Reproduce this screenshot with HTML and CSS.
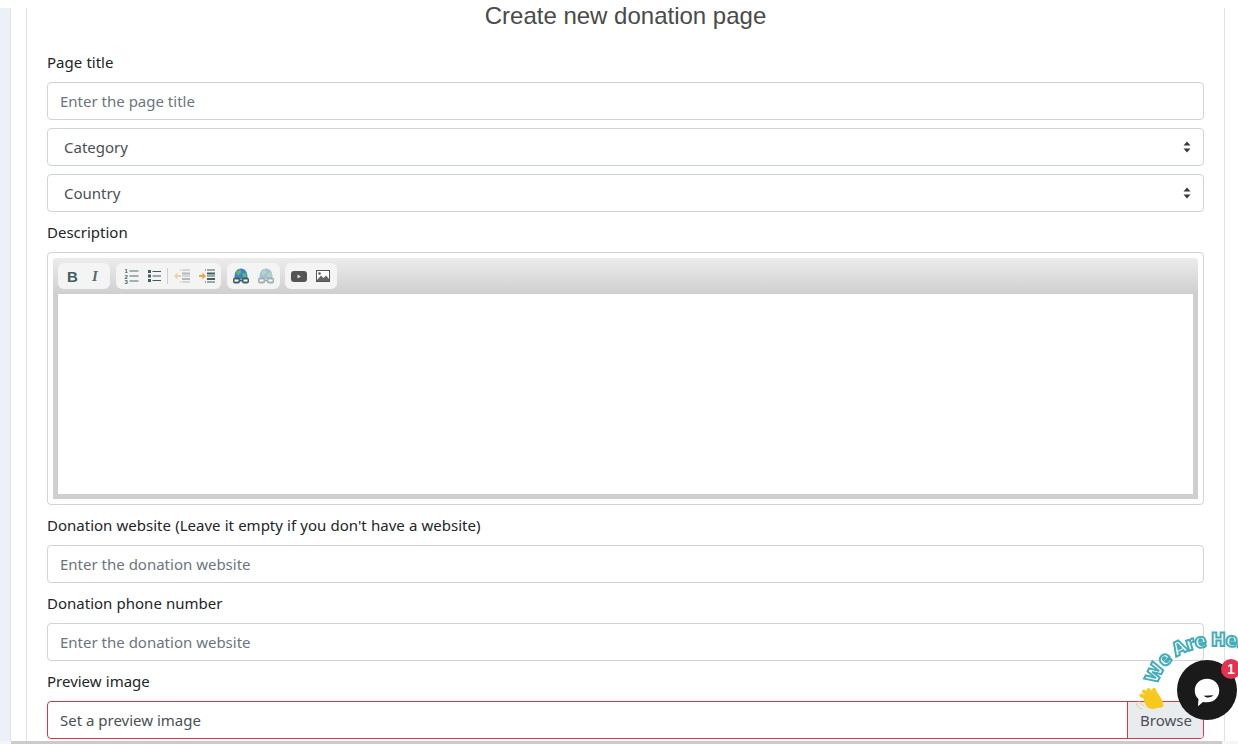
FILE: index.html
```html
<!DOCTYPE html>
<html lang="en">
<head>
<meta charset="utf-8">
<title>Create new donation page</title>
<link rel="stylesheet" href="styles.css">
</head>
<body>
<div class="page">
  <div class="main">
    <aside class="strip"></aside>
    <div class="content">
      <section class="card">
        <h3 class="title">Create new donation page</h3>
        <label class="label">Page title</label>
        <input class="field" type="text" placeholder="Enter the page title">
        <div class="field select"><span>Category</span><svg class="updown" viewBox="0 0 8 12"><path d="M4 0.5 7.5 4.6H0.5Z M4 11.5 0.5 7.4H7.5Z"/></svg></div>
        <div class="field select"><span>Country</span><svg class="updown" viewBox="0 0 8 12"><path d="M4 0.5 7.5 4.6H0.5Z M4 11.5 0.5 7.4H7.5Z"/></svg></div>
        <label class="label">Description</label>
        <div class="editor-box">
          <div class="editor">
            <div class="toolbar">
              <div class="tgroup g1">
                <span class="tb-b">B</span>
                <span class="tb-i">I</span>
              </div>
              <div class="tgroup g2">
                <svg class="ic" width="15" height="16" viewBox="0 0 15 16"><g class="ol-num"><text x="0.500" y="5">1</text><text x="0.500" y="10.500">2</text><text x="0.500" y="15.500">3</text></g><g fill="#4d6a6a"><rect x="5.500" y="2.500" width="9" height="1"/><rect x="5.500" y="7.500" width="9" height="1"/><rect x="5.500" y="12.500" width="9" height="1"/></g></svg>
                <svg class="ic" width="13" height="14" viewBox="0 0 13 14"><g fill="#3f5f5f"><rect x="0" y="1" width="3" height="3"/><rect x="0" y="5.500" width="3" height="3"/><rect x="0" y="10" width="3" height="3"/><rect x="4.500" y="2" width="8.500" height="1"/><rect x="4.500" y="6.500" width="8.500" height="1"/><rect x="4.500" y="11" width="8.500" height="1"/></g></svg>
                <i class="sep"></i>
                <svg class="ic faded" width="16" height="14" viewBox="0 0 16 14"><g fill="#5a7676"><rect x="6" y="0.500" width="1" height="1"/><rect x="6" y="12.500" width="1" height="1"/><rect x="8" y="0.500" width="8" height="1"/><rect x="8" y="3.500" width="8" height="2"/><rect x="8" y="6.500" width="8" height="1"/><rect x="8" y="9" width="8" height="2"/><rect x="8" y="12.500" width="8" height="1"/></g><path d="M0 7 3.500 3.500V6H7V8H3.500V10.500Z" fill="#f5a23c"/></svg>
                <svg class="ic" width="16" height="14" viewBox="0 0 16 14"><g fill="#3f5f5f"><rect x="6" y="0.500" width="1" height="1"/><rect x="6" y="12.500" width="1" height="1"/><rect x="8" y="0.500" width="8" height="1"/><rect x="8" y="3.500" width="8" height="2"/><rect x="8" y="6.500" width="8" height="1"/><rect x="8" y="9" width="8" height="2"/><rect x="8" y="12.500" width="8" height="1"/></g><path d="M7 7 3.500 3.500V6H0V8H3.500V10.500Z" fill="#f5a23c"/></svg>
              </div>
              <div class="tgroup g3">
                <svg class="ic" width="16" height="16" viewBox="0 0 16 16"><path d="M1.500 9C1.500 4 4 0.500 8 0.500S14.500 4 14.500 9V11H1.500Z" fill="#3d7fd6"/><path d="M3 4 7 1 8.500 4.500 5 8ZM9 5.500 13.500 5 13.500 9H10Z" fill="#63b95a"/><g fill="#3f5f5f"><rect x="0" y="9.500" width="7" height="6" rx="2"/><rect x="9" y="9.500" width="7" height="6" rx="2"/><rect x="5" y="11.500" width="6" height="2"/></g><g fill="#fff"><rect x="1.500" y="11.500" width="4" height="2"/><rect x="10.500" y="11.500" width="4" height="2"/></g></svg>
                <svg class="ic faded" width="16" height="16" viewBox="0 0 16 16"><path d="M1.500 9C1.500 4 4 0.500 8 0.500S14.500 4 14.500 9V11H1.500Z" fill="#3d7fd6"/><path d="M3 4 7 1 8.500 4.500 5 8ZM9 5.500 13.500 5 13.500 9H10Z" fill="#63b95a"/><g fill="#3f5f5f"><rect x="0" y="9.500" width="7" height="6" rx="2"/><rect x="9" y="9.500" width="7" height="6" rx="2"/><rect x="5" y="11.500" width="6" height="2"/></g><g fill="#fff"><rect x="1.500" y="11.500" width="4" height="2"/><rect x="10.500" y="11.500" width="4" height="2"/></g></svg>
              </div>
              <div class="tgroup g4">
                <svg class="ic" width="16" height="11" viewBox="0 0 16 11"><rect width="16" height="11" rx="3" fill="#555"/><path d="M6.500 3.500 10 5.500 6.500 7.500Z" fill="#ddd"/></svg>
                <svg class="ic" width="14" height="12" viewBox="0 0 14 12"><rect x="0.500" y="0.500" width="13" height="11" fill="#fff" stroke="#555"/><circle cx="3.500" cy="3.500" r="1.300" fill="#555"/><path d="M1 10 5 5.500 7.500 8 10 5.500 13 9V11H1Z" fill="#666"/></svg>
              </div>
            </div>
            <div class="edit-area"></div>
          </div>
        </div>
        <label class="label">Donation website (Leave it empty if you don't have a website)</label>
        <input class="field" type="text" placeholder="Enter the donation website">
        <label class="label">Donation phone number</label>
        <input class="field" type="text" placeholder="Enter the donation website">
        <label class="label">Preview image</label>
        <div class="file">
          <span class="file-text">Set a preview image</span>
          <span class="file-btn">Browse</span>
        </div>
      </section>
    </div>
  </div>
  <div class="hscroll"><div class="hthumb"></div></div>
</div>
<div class="chat">
  <svg class="chat-art" width="110" height="120" viewBox="0 0 110 120">
    <defs><path id="arc" d="M29 61C35 38 58 15 114 24"/></defs>
    <text class="arc-text"><textPath href="#arc">We Are Here</textPath></text>
    <path class="hand" d="M16 72C18 70 24 68 29 68C32 72 35 77 35.500 81C35.500 83 33 84.500 30.500 83.500C27 85.500 22 85.500 19 83C17 80 15 76 16 72Z"/>
    <path class="finger" d="M22 75 13.500 71.500M23 73 16 67.500M25 72 20.500 66M28 72 26 66"/>
    <path class="wave" d="M11 77C12 79 14 81 16 82M8 79C9 82 11 84 14 85"/>
  </svg>
  <div class="chat-btn">
    <svg width="28" height="31" viewBox="0 0 34 38"><path d="M17 2C26 2 32 8.500 32 16.500C32 25 25.500 31 17 31C15 31 13.500 31 12 30.500L6 36L6.500 27C3.500 24.500 2 20.500 2 16.500C2 8.500 8 2 17 2Z" fill="#fff"/><path d="M13 23C16 26 21 26 25 22.500Z" fill="#1a1a1a"/></svg>
  </div>
  <span class="badge">1</span>
</div>
</body>
</html>
```
FILE: styles.css
```css
* { box-sizing: border-box; }
html, body { margin: 0; height: 744px; overflow: hidden; background: #fff; }
body { font-family: "Noto Sans", "Open Sans", sans-serif; font-size: 15px; color: #212529; }
.page { display: flex; flex-direction: column; height: 744px; }
.main { display: flex; height: 741px; }
.strip { width: 11px; background: #ecf1f8; border-right: 1px solid #dfe3e8; margin-top: 8px; }
.content { flex: 1; padding: 8px 13px 0 15px; }
.card { width: 1199px; height: 733px; border-left: 1px solid #dfe2e6; border-right: 1px solid #dfe2e6; padding: 0 20px; display: flex; flex-direction: column; }
.title { margin: 0 0 26px; height: 16px; line-height: 16px; font-family: "Liberation Sans", Arial, sans-serif; font-size: 24px; font-weight: 400; color: #4a4a4a; text-align: center; }
.label { display: block; height: 24px; line-height: 24px; margin-bottom: 8px; color: #212529; word-spacing: .3px; }
.field { display: flex; align-items: center; justify-content: space-between; flex: none; width: 100%; height: 38px; margin-bottom: 8px; padding: 0 12px; border: 1px solid #ced4da; border-radius: 4px; background: #fff; font: inherit; color: #495057; outline: none; }
.field::placeholder { color: #6c757d; opacity: 1; }
.select { padding: 0 12px 0 16px; }
.updown { width: 8px; height: 12px; fill: #343a40; }
.editor-box { flex: none; height: 253px; margin-bottom: 8px; padding: 5px; border: 1px solid #ced4da; border-radius: 4px; }
.editor { height: 241px; padding: 0 5px 5px; background: #cfcfcf; border-radius: 3px 3px 0 0; display: flex; flex-direction: column; background-image: linear-gradient(#ececec, #cfcfcf 36px); }
.toolbar { flex: none; height: 36px; padding-top: 5px; display: flex; gap: 6px; align-items: flex-start; }
.tgroup { height: 26px; background: #f4f4f4; border-radius: 6px; display: flex; align-items: center; }
.g1 { width: 52px; gap: 15px; padding-left: 9px; }
.g2 { width: 105px; gap: 9px; padding-left: 8px; }
.g3 { width: 53px; gap: 9px; padding-left: 6px; }
.g4 { width: 52px; gap: 9px; padding-left: 6px; margin-left: -1px; }
.tb-b { font: 700 15px/1 "Liberation Sans", sans-serif; color: #3f6060; width: 10px; }
.tb-i { font: italic 700 15px/1 "Liberation Serif", serif; color: #5b6b6b; }
.ol-num { font: 700 6px "Liberation Sans", sans-serif; fill: #3f5f5f; }
.sep { width: 1px; height: 16px; background: #cfcfcf; margin: 0 -3px 0 -3px; }
.ic { flex: none; display: block; }
.faded { opacity: .45; }
.edit-area { flex: 1; background: #fff; }
.file { flex: none; height: 38px; display: flex; border: 1px solid #dc3545; border-radius: 4px; overflow: hidden; }
.file-text { flex: 1; padding: 0 12px; line-height: 36px; color: #495057; }
.file-btn { width: 76px; padding-left: 12px; line-height: 36px; background: #e9ecef; border-left: 1px solid #dc3545; color: #495057; }
.hscroll { height: 3px; padding: 0 16px 0 11px; background: #f3f5f8; }
.hthumb { height: 3px; background: #cbcbcb; }
.chat { position: fixed; right: 0; bottom: 0; width: 110px; height: 120px; }
.chat-art { position: absolute; left: 0; top: 0; overflow: visible; }
.arc-text { font: 800 19px "Open Sans", sans-serif; fill: #fff; stroke: #45adb9; stroke-width: 2px; letter-spacing: -.6px; }
.hand { fill: #f8c81c; }
.finger { fill: none; stroke: #f8c81c; stroke-width: 4px; stroke-linecap: round; }
.wave { fill: none; stroke: #e3cf7c; stroke-width: 1px; }
.chat-btn { position: absolute; left: 49px; top: 36px; width: 60px; height: 60px; border-radius: 50%; background: #1a1a1a; display: flex; align-items: center; justify-content: center; padding-top: 4px; }
.badge { position: absolute; left: 93px; top: 35px; width: 20px; height: 20px; border-radius: 50%; background: #e8304f; color: #fff; font: 700 14px/20px "Liberation Sans", sans-serif; text-align: center; }
```
